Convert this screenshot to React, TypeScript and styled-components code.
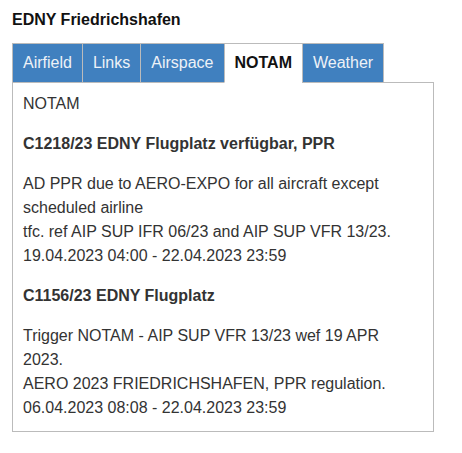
import React, { useState } from 'react';
import styled, { createGlobalStyle } from 'styled-components';

type Notam = {
  id: string;
  title: string;
  lines: string[];
};

const tabs = ['Airfield', 'Links', 'Airspace', 'NOTAM', 'Weather'];

const notams: Notam[] = [
  {
    id: 'C1218/23',
    title: 'C1218/23 EDNY Flugplatz verfügbar, PPR',
    lines: [
      'AD PPR due to AERO-EXPO for all aircraft except scheduled airline',
      'tfc. ref AIP SUP IFR 06/23 and AIP SUP VFR 13/23.',
      '19.04.2023 04:00 - 22.04.2023 23:59',
    ],
  },
  {
    id: 'C1156/23',
    title: 'C1156/23 EDNY Flugplatz',
    lines: [
      'Trigger NOTAM - AIP SUP VFR 13/23 wef 19 APR 2023.',
      'AERO 2023 FRIEDRICHSHAFEN, PPR regulation.',
      '06.04.2023 08:08 - 22.04.2023 23:59',
    ],
  },
];

export default function App() {
  const [active, setActive] = useState('NOTAM');

  return (
    <>
      <GlobalStyle />
      <Page>
        <Title>EDNY Friedrichshafen</Title>
        <TabBar>
          {tabs.map((tab) => (
            <Tab key={tab} $active={tab === active} onClick={() => setActive(tab)}>
              {tab}
            </Tab>
          ))}
        </TabBar>
        <Panel>
          <Text>NOTAM</Text>
          {notams.map((n) => (
            <React.Fragment key={n.id}>
              <Heading>{n.title}</Heading>
              <Text>
                {n.lines.map((line, i) => (
                  <React.Fragment key={i}>
                    {i > 0 && <br />}
                    {line}
                  </React.Fragment>
                ))}
              </Text>
            </React.Fragment>
          ))}
        </Panel>
      </Page>
    </>
  );
}

const GlobalStyle = createGlobalStyle`
  body {
    margin: 0;
    background: #fff;
    font-family: "Liberation Sans", Arial, sans-serif;
    font-size: 16px;
    line-height: 24px;
    color: #333;
  }
`;

const Page = styled.div`
  padding: 8px 12px;
`;

const Title = styled.div`
  font-weight: 700;
  color: #111;
  margin-bottom: 11px;
`;

const TabBar = styled.div`
  display: flex;
  position: relative;
  z-index: 1;
  margin-bottom: -1px;
`;

const Tab = styled.div<{ $active: boolean }>`
  padding: 7px 10px;
  margin-right: -1px;
  border: 1px solid #bbb;
  border-bottom-color: ${(p) => (p.$active ? '#fff' : '#bbb')};
  background: ${(p) => (p.$active ? '#fff' : '#4080bf')};
  color: ${(p) => (p.$active ? '#111' : '#eef2f7')};
  font-weight: ${(p) => (p.$active ? 700 : 400)};
  cursor: pointer;
`;

const Panel = styled.div`
  width: 422px;
  box-sizing: border-box;
  border: 1px solid #bbb;
  padding: 9px 10px 11px;
`;

const Text = styled.p`
  margin: 0 0 16px;
  &:last-child {
    margin-bottom: 0;
  }
`;

const Heading = styled.p`
  margin: 0 0 16px;
  font-weight: 700;
`;
